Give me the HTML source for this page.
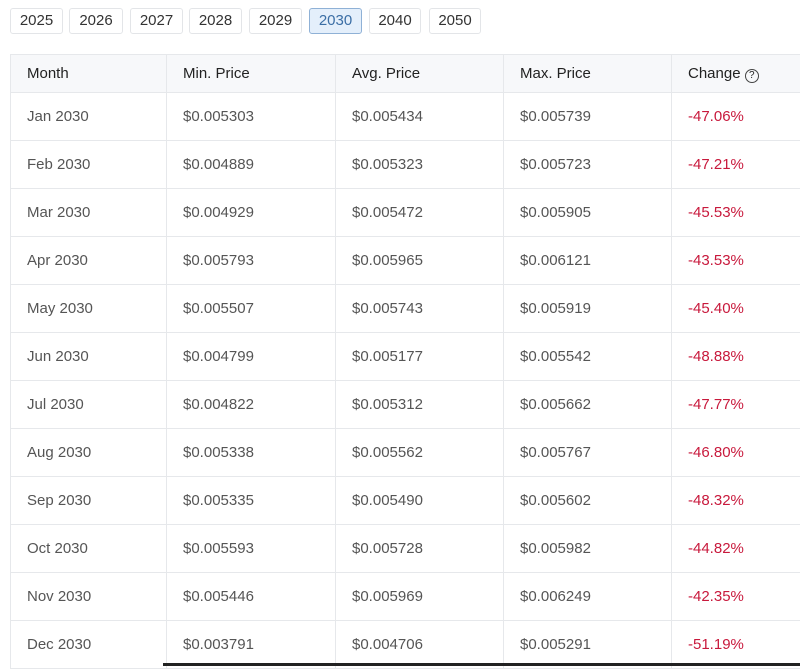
<!DOCTYPE html>
<html><head><style>
body{margin:0;background:#fff;font-family:"Liberation Sans",sans-serif;width:800px;height:666px;overflow:hidden;position:relative}
.btn{position:absolute;top:8px;height:24px;border:1px solid #e3e5e8;border-radius:3px;font-size:15px;color:#333;text-align:center;line-height:24px;background:#fff}
.btn.a{background:#e4effb;border-color:#8fb1d6;color:#3b6ea5}
table{position:absolute;left:10px;top:54px;border-collapse:collapse;width:810px;font-size:15px}
td,th{border:1px solid #e6e8eb;padding:0 0 0 16px;text-align:left;height:47px;color:#555;font-weight:normal}
th{background:#f7f8fa;color:#222;height:37px;font-weight:500}
td.r{color:#c8193c}
.q{display:inline-block;width:12px;height:12px;border:1.3px solid #444;border-radius:50%;font-size:10px;line-height:12px;text-align:center;vertical-align:0px;margin-left:0}
.bar{position:absolute;left:163px;top:663px;width:637px;height:3px;background:#222}
</style></head><body>
<div class="btn" style="left:10px;width:51px">2025</div>
<div class="btn" style="left:69px;width:52px">2026</div>
<div class="btn" style="left:130px;width:51px">2027</div>
<div class="btn" style="left:189px;width:51px">2028</div>
<div class="btn" style="left:249px;width:51px">2029</div>
<div class="btn a" style="left:309px;width:51px">2030</div>
<div class="btn" style="left:369px;width:50px">2040</div>
<div class="btn" style="left:429px;width:50px">2050</div>
<table>
<colgroup><col style="width:156px"><col style="width:169px"><col style="width:168px"><col style="width:168px"><col></colgroup>
<tr><th>Month</th><th>Min. Price</th><th>Avg. Price</th><th>Max. Price</th><th>Change <span class="q">?</span></th></tr>
<tr><td>Jan 2030</td><td>$0.005303</td><td>$0.005434</td><td>$0.005739</td><td class="r">-47.06%</td></tr>
<tr><td>Feb 2030</td><td>$0.004889</td><td>$0.005323</td><td>$0.005723</td><td class="r">-47.21%</td></tr>
<tr><td>Mar 2030</td><td>$0.004929</td><td>$0.005472</td><td>$0.005905</td><td class="r">-45.53%</td></tr>
<tr><td>Apr 2030</td><td>$0.005793</td><td>$0.005965</td><td>$0.006121</td><td class="r">-43.53%</td></tr>
<tr><td>May 2030</td><td>$0.005507</td><td>$0.005743</td><td>$0.005919</td><td class="r">-45.40%</td></tr>
<tr><td>Jun 2030</td><td>$0.004799</td><td>$0.005177</td><td>$0.005542</td><td class="r">-48.88%</td></tr>
<tr><td>Jul 2030</td><td>$0.004822</td><td>$0.005312</td><td>$0.005662</td><td class="r">-47.77%</td></tr>
<tr><td>Aug 2030</td><td>$0.005338</td><td>$0.005562</td><td>$0.005767</td><td class="r">-46.80%</td></tr>
<tr><td>Sep 2030</td><td>$0.005335</td><td>$0.005490</td><td>$0.005602</td><td class="r">-48.32%</td></tr>
<tr><td>Oct 2030</td><td>$0.005593</td><td>$0.005728</td><td>$0.005982</td><td class="r">-44.82%</td></tr>
<tr><td>Nov 2030</td><td>$0.005446</td><td>$0.005969</td><td>$0.006249</td><td class="r">-42.35%</td></tr>
<tr><td>Dec 2030</td><td>$0.003791</td><td>$0.004706</td><td>$0.005291</td><td class="r">-51.19%</td></tr>
</table>
<div class="bar"></div>
</body></html>
